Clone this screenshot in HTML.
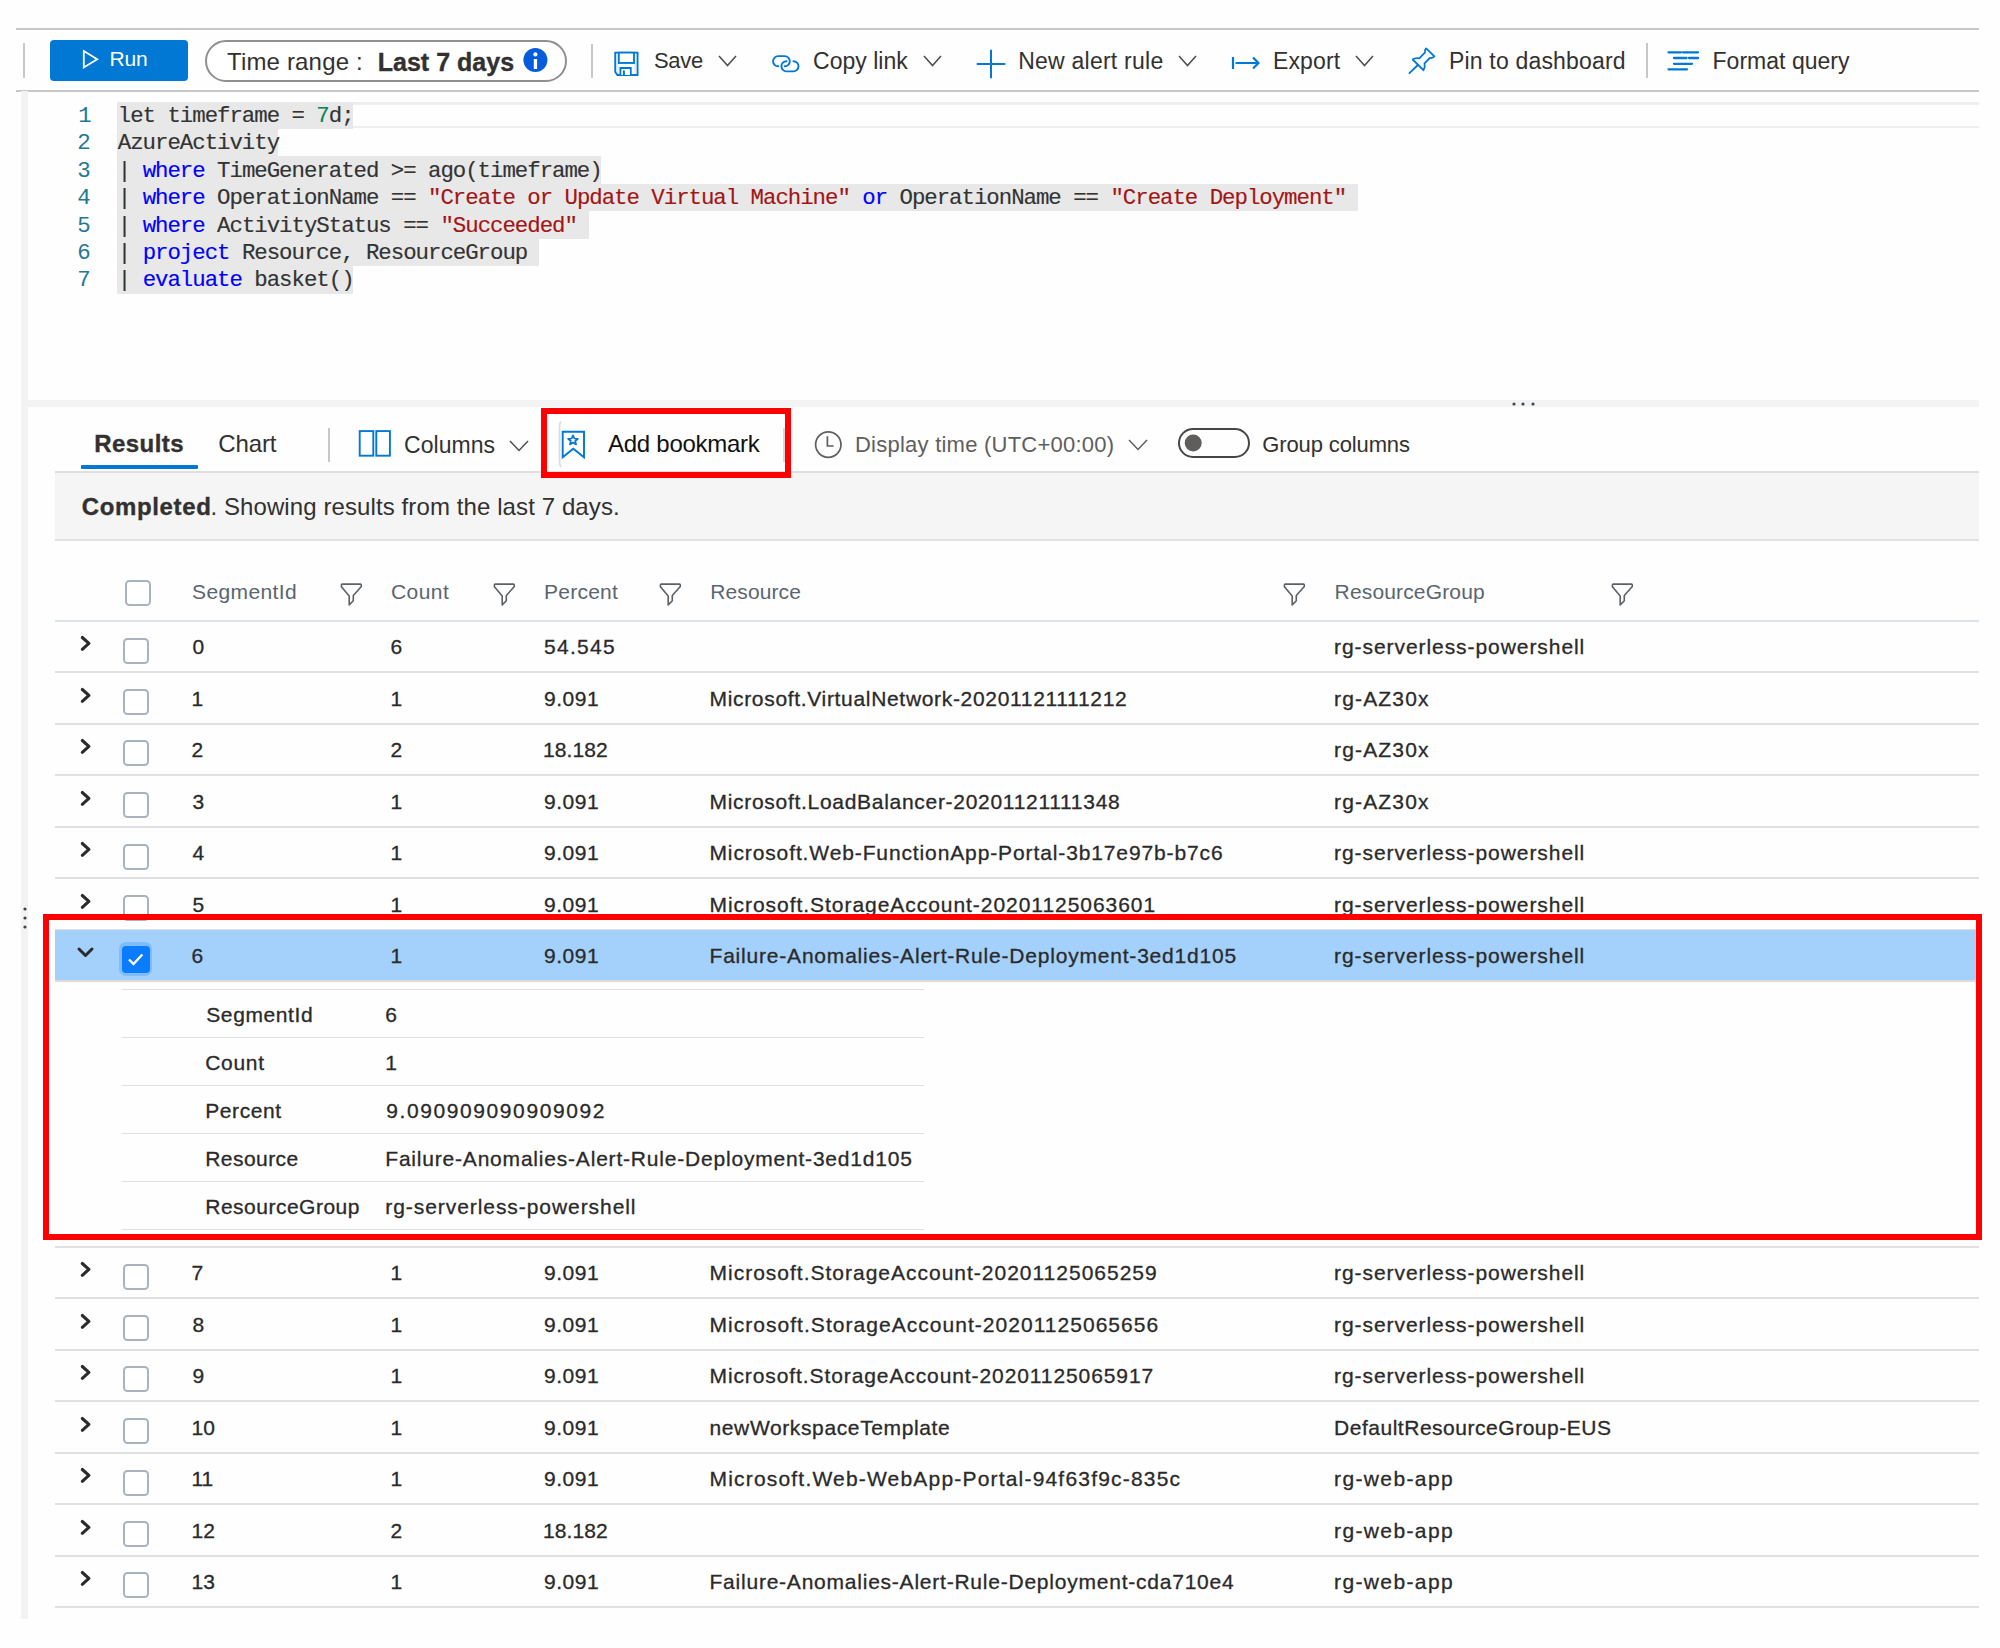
<!DOCTYPE html>
<html><head><meta charset="utf-8"><title>Log Analytics</title>
<style>
html,body{margin:0;padding:0;background:#fefefe;}
body{width:2000px;height:1648px;position:relative;overflow:hidden;font-family:"Liberation Sans", sans-serif;}
b{font-weight:bold}
</style></head><body>
<div style="position:absolute;left:16px;top:28px;width:1963px;height:2px;background:#c8c8c8;"></div>
<div style="position:absolute;left:16px;top:89.5px;width:1963px;height:2px;background:#c8c8c8;"></div>
<div style="position:absolute;left:23px;top:43px;width:2px;height:35px;background:#c8c8c8;"></div>
<div style="position:absolute;left:50px;top:40px;width:138px;height:41px;box-sizing:border-box;background:#0078d4;border-radius:4px"></div>
<svg style="position:absolute;left:80px;top:47px;overflow:visible;" width="22" height="25" viewBox="0 0 22 25"><path d="M3.8 4.0 L17.2 12.2 L3.8 20.4 Z" fill="none" stroke="#fff" stroke-width="1.8" stroke-linejoin="miter"/></svg>
<div style="position:absolute;left:205px;top:40px;width:362px;height:42px;box-sizing:border-box;border:2px solid #8f8f8f;border-radius:21px;background:#fff"></div>
<svg style="position:absolute;left:523px;top:48px;overflow:visible;" width="25" height="25" viewBox="0 0 25 25"><circle cx="12.4" cy="12" r="12" fill="#065cdc"/><circle cx="12.4" cy="6.4" r="2.1" fill="#fff"/><rect x="10.8" y="11" width="3.3" height="10" fill="#fff"/></svg>
<div style="position:absolute;left:591px;top:43.5px;width:2px;height:34px;background:#c8c8c8;"></div>
<svg style="position:absolute;left:610px;top:48px;overflow:visible;" width="32" height="32" viewBox="0 0 32 32"><path d="M5.2 4.7 H27.6 V27 H7.4 L5.2 23.9 Z" fill="#e3effb" stroke="#0078d4" stroke-width="1.8" stroke-linejoin="miter"/><path d="M8.8 4.7 V15 H24 V4.7 Z" fill="#fff" stroke="#0078d4" stroke-width="1.8"/><path d="M8.8 15.9 H24 V26.1 H8.8 Z" fill="#fff"/><path d="M10.4 27 V20 H20.8 V27" fill="#fff" stroke="#0078d4" stroke-width="1.8"/><path d="M13.9 23.3 V27" stroke="#0078d4" stroke-width="2" stroke-linecap="round"/></svg>
<svg style="position:absolute;left:717.5px;top:55px;overflow:visible;" width="19" height="11" viewBox="0 0 19 11"><path d="M1 1 L9.5 10.5 L18 1" fill="none" stroke="#505050" stroke-width="1.6"/></svg>
<svg style="position:absolute;left:765px;top:48px;overflow:visible;" width="40" height="30" viewBox="0 0 40 30"><path d="M13.2 18.3 A5.1 5.1 0 0 1 13.2 8.1 H19.7 A5.1 5.1 0 0 1 19.7 18.3" fill="none" stroke="#0078d4" stroke-width="1.9" stroke-linecap="round"/><path d="M21.5 13.2 A5.1 5.1 0 0 0 21.5 23.4 H28.4 A5.1 5.1 0 0 0 28.4 13.2" fill="none" stroke="#0078d4" stroke-width="1.9" stroke-linecap="round"/></svg>
<svg style="position:absolute;left:922.7px;top:55px;overflow:visible;" width="19" height="11" viewBox="0 0 19 11"><path d="M1 1 L9.5 10.5 L18 1" fill="none" stroke="#505050" stroke-width="1.6"/></svg>
<svg style="position:absolute;left:976px;top:49px;overflow:visible;" width="30" height="30" viewBox="0 0 30 30"><path d="M15 1.5 V28.5 M1.5 15 H28.5" stroke="#0078d4" stroke-width="2" stroke-linecap="round"/></svg>
<svg style="position:absolute;left:1177.6px;top:55px;overflow:visible;" width="19" height="11" viewBox="0 0 19 11"><path d="M1 1 L9.5 10.5 L18 1" fill="none" stroke="#505050" stroke-width="1.6"/></svg>
<svg style="position:absolute;left:1230px;top:55px;overflow:visible;" width="31" height="16" viewBox="0 0 31 16"><path d="M3 2 V14" stroke="#0078d4" stroke-width="2.2"/><path d="M5.5 8 H28.5 M23 2.5 L28.5 8 L23 13.5" fill="none" stroke="#0078d4" stroke-width="2.2"/></svg>
<svg style="position:absolute;left:1354.7px;top:55px;overflow:visible;" width="19" height="11" viewBox="0 0 19 11"><path d="M1 1 L9.5 10.5 L18 1" fill="none" stroke="#505050" stroke-width="1.6"/></svg>
<svg style="position:absolute;left:1403px;top:44px;overflow:visible;" width="38" height="34" viewBox="0 0 38 34"><path d="M23.1 4.4 L31.4 12.4 Q29 14.6 26.8 14.0 L21.5 19.4 Q22.5 23 20.4 26.2 L9.7 15.5 Q12.5 13.5 16.3 14.4 L21.9 8.7 Q21.3 6.5 23.1 4.4 Z" fill="none" stroke="#0078d4" stroke-width="1.8" stroke-linejoin="round"/><path d="M14.9 21.0 L6.4 29.1" stroke="#0078d4" stroke-width="1.8" stroke-linecap="round"/></svg>
<div style="position:absolute;left:1646px;top:43px;width:2px;height:34.5px;background:#c8c8c8;"></div>
<svg style="position:absolute;left:1666px;top:50px;overflow:visible;" width="34" height="22" viewBox="0 0 34 22"><path d="M2.5 2.3 H15 M17 2.3 H32 M8 8 H20.5 M23 8 H32 M8 13.8 H26 M2.5 19.3 H21" stroke="#0078d4" stroke-width="2.3" stroke-linecap="round"/></svg>
<div style="position:absolute;left:21px;top:91px;width:7px;height:1528px;background:#f3f3f3;"></div>
<div style="position:absolute;left:117px;top:102px;width:1862px;height:2.6px;background:#eeeeee;"></div>
<div style="position:absolute;left:117px;top:125.9px;width:1862px;height:2.6px;background:#eeeeee;"></div>
<div style="position:absolute;left:117px;top:101.6px;width:235.79px;height:27.73px;background:#e8e8e8;"></div>
<div style="position:absolute;left:117px;top:128.93px;width:161.33px;height:27.73px;background:#e8e8e8;"></div>
<div style="position:absolute;left:117px;top:156.26px;width:483.99px;height:27.73px;background:#e8e8e8;"></div>
<div style="position:absolute;left:117px;top:183.59px;width:1241.0px;height:27.73px;background:#e8e8e8;"></div>
<div style="position:absolute;left:117px;top:210.92px;width:471.58px;height:27.73px;background:#e8e8e8;"></div>
<div style="position:absolute;left:117px;top:238.25px;width:421.94px;height:27.73px;background:#e8e8e8;"></div>
<div style="position:absolute;left:117px;top:265.58px;width:235.79px;height:28.2px;background:#e8e8e8;"></div>
<div style="position:absolute;left:28px;top:400px;width:1951px;height:7px;background:#f3f3f3;"></div>
<svg style="position:absolute;left:1512.3px;top:401.5px;overflow:visible;" width="4" height="4" viewBox="0 0 4 4"><circle cx="2" cy="2" r="1.6" fill="#3f4651"/></svg>
<svg style="position:absolute;left:1521.4px;top:401.5px;overflow:visible;" width="4" height="4" viewBox="0 0 4 4"><circle cx="2" cy="2" r="1.6" fill="#3f4651"/></svg>
<svg style="position:absolute;left:1530.5px;top:401.5px;overflow:visible;" width="4" height="4" viewBox="0 0 4 4"><circle cx="2" cy="2" r="1.6" fill="#3f4651"/></svg>
<div style="position:absolute;left:81px;top:465.2px;width:117px;height:3.6px;background:#0078d4;border-radius:1px"></div>
<div style="position:absolute;left:328px;top:428px;width:2px;height:34px;background:#c8c8c8;"></div>
<svg style="position:absolute;left:357px;top:429px;overflow:visible;" width="36" height="28" viewBox="0 0 36 28"><rect x="2.7" y="2.1" width="13.6" height="24.6" fill="none" stroke="#0078d4" stroke-width="1.9"/><rect x="19.3" y="2.1" width="13.6" height="24.6" fill="none" stroke="#0078d4" stroke-width="1.9"/></svg>
<svg style="position:absolute;left:509px;top:440.4px;overflow:visible;" width="20" height="11" viewBox="0 0 20 11"><path d="M1 1 L10.0 10.5 L19 1" fill="none" stroke="#505050" stroke-width="1.5"/></svg>
<svg style="position:absolute;left:556px;top:420px;overflow:visible;" width="6" height="50" viewBox="0 0 6 50"><path d="M5 1.5 Q3.5 3 3.5 7 V41 Q3.5 45 5 47" fill="none" stroke="#dddddd" stroke-width="1.8"/></svg>
<div style="position:absolute;left:782.8px;top:428px;width:1.8px;height:34px;background:#d8d8d8;"></div>
<svg style="position:absolute;left:560px;top:430px;overflow:visible;" width="27" height="30" viewBox="0 0 27 30"><path d="M2.7 1.7 H24 V27.3 L13.3 18.7 L2.7 27.3 Z" fill="none" stroke="#0078d4" stroke-width="1.9" stroke-linejoin="miter"/><path d="M13 5.3 L14.4 8.5 L17.9 8.8 L15.2 11 L16.1 14.4 L13 12.6 L9.9 14.4 L10.8 11 L8.1 8.8 L11.6 8.5 Z" fill="none" stroke="#0078d4" stroke-width="1.7" stroke-linejoin="round"/></svg>
<svg style="position:absolute;left:813px;top:430px;overflow:visible;" width="31" height="30" viewBox="0 0 31 30"><circle cx="15.3" cy="14.6" r="12.7" fill="none" stroke="#605e5c" stroke-width="1.7"/><path d="M14.4 6.2 V16 H20.6" fill="none" stroke="#605e5c" stroke-width="1.7"/></svg>
<svg style="position:absolute;left:1128px;top:438.9px;overflow:visible;" width="20" height="11" viewBox="0 0 20 11"><path d="M1 1 L10.0 10.5 L19 1" fill="none" stroke="#605e5c" stroke-width="1.5"/></svg>
<div style="position:absolute;left:1178px;top:428px;width:72px;height:30.2px;box-sizing:border-box;border:2px solid #484644;border-radius:15.1px"></div>
<svg style="position:absolute;left:1184px;top:434px;overflow:visible;" width="18" height="18" viewBox="0 0 18 18"><circle cx="9.2" cy="8.9" r="8.5" fill="#605e5c"/></svg>
<div style="position:absolute;left:55px;top:470.6px;width:1924px;height:2px;background:#e1dfdd;"></div>
<div style="position:absolute;left:55px;top:472.6px;width:1924px;height:66.6px;background:#f5f5f5;"></div>
<div style="position:absolute;left:55px;top:539.2px;width:1924px;height:2px;background:#e1e1e1;"></div>
<div style="position:absolute;left:541px;top:408px;width:250px;height:70px;box-sizing:border-box;border:6px solid #ff0000;z-index:5"></div>
<div style="position:absolute;left:124.5px;top:580px;width:26.3px;height:26.3px;box-sizing:border-box;border:2px solid #a9b3bd;border-radius:4.5px;background:#fff"></div>
<svg style="position:absolute;left:341px;top:583px;overflow:visible;" width="22" height="23" viewBox="0 0 22 23"><path d="M1.3 1.1 H19.4 Q20.3 1.1 20.3 2 V3.4 L12.3 12.6 V17.7 L8.2 21.9 V13.1 L0.4 3.7 V2 Q0.4 1.1 1.3 1.1 Z" fill="none" stroke="#5c6166" stroke-width="1.6" stroke-linejoin="round"/></svg>
<svg style="position:absolute;left:493.5px;top:583px;overflow:visible;" width="22" height="23" viewBox="0 0 22 23"><path d="M1.3 1.1 H19.4 Q20.3 1.1 20.3 2 V3.4 L12.3 12.6 V17.7 L8.2 21.9 V13.1 L0.4 3.7 V2 Q0.4 1.1 1.3 1.1 Z" fill="none" stroke="#5c6166" stroke-width="1.6" stroke-linejoin="round"/></svg>
<svg style="position:absolute;left:660px;top:583px;overflow:visible;" width="22" height="23" viewBox="0 0 22 23"><path d="M1.3 1.1 H19.4 Q20.3 1.1 20.3 2 V3.4 L12.3 12.6 V17.7 L8.2 21.9 V13.1 L0.4 3.7 V2 Q0.4 1.1 1.3 1.1 Z" fill="none" stroke="#5c6166" stroke-width="1.6" stroke-linejoin="round"/></svg>
<svg style="position:absolute;left:1284.4px;top:583px;overflow:visible;" width="22" height="23" viewBox="0 0 22 23"><path d="M1.3 1.1 H19.4 Q20.3 1.1 20.3 2 V3.4 L12.3 12.6 V17.7 L8.2 21.9 V13.1 L0.4 3.7 V2 Q0.4 1.1 1.3 1.1 Z" fill="none" stroke="#5c6166" stroke-width="1.6" stroke-linejoin="round"/></svg>
<svg style="position:absolute;left:1612px;top:583px;overflow:visible;" width="22" height="23" viewBox="0 0 22 23"><path d="M1.3 1.1 H19.4 Q20.3 1.1 20.3 2 V3.4 L12.3 12.6 V17.7 L8.2 21.9 V13.1 L0.4 3.7 V2 Q0.4 1.1 1.3 1.1 Z" fill="none" stroke="#5c6166" stroke-width="1.6" stroke-linejoin="round"/></svg>
<div style="position:absolute;left:55px;top:619.5px;width:1924px;height:2px;background:#dde3ea;"></div>
<svg style="position:absolute;left:79.5px;top:636.0px;overflow:visible;" width="12" height="17" viewBox="0 0 12 17"><path d="M2.3 1.5 L8.9 7.4 L2.3 13.3" fill="none" stroke="#2b2b2b" stroke-width="3.1" stroke-linecap="round" stroke-linejoin="round"/></svg>
<div style="position:absolute;left:123px;top:638px;width:26.3px;height:26.3px;box-sizing:border-box;border:2px solid #a9b3bd;border-radius:4.5px;background:#fff"></div>
<div style="position:absolute;left:55px;top:671.0px;width:1924px;height:2px;background:#e0e0e0;"></div>
<svg style="position:absolute;left:79.5px;top:687.5px;overflow:visible;" width="12" height="17" viewBox="0 0 12 17"><path d="M2.3 1.5 L8.9 7.4 L2.3 13.3" fill="none" stroke="#2b2b2b" stroke-width="3.1" stroke-linecap="round" stroke-linejoin="round"/></svg>
<div style="position:absolute;left:123px;top:689px;width:26.3px;height:26.3px;box-sizing:border-box;border:2px solid #a9b3bd;border-radius:4.5px;background:#fff"></div>
<div style="position:absolute;left:55px;top:722.5px;width:1924px;height:2px;background:#e0e0e0;"></div>
<svg style="position:absolute;left:79.5px;top:739.0px;overflow:visible;" width="12" height="17" viewBox="0 0 12 17"><path d="M2.3 1.5 L8.9 7.4 L2.3 13.3" fill="none" stroke="#2b2b2b" stroke-width="3.1" stroke-linecap="round" stroke-linejoin="round"/></svg>
<div style="position:absolute;left:123px;top:740px;width:26.3px;height:26.3px;box-sizing:border-box;border:2px solid #a9b3bd;border-radius:4.5px;background:#fff"></div>
<div style="position:absolute;left:55px;top:774.0px;width:1924px;height:2px;background:#e0e0e0;"></div>
<svg style="position:absolute;left:79.5px;top:790.5px;overflow:visible;" width="12" height="17" viewBox="0 0 12 17"><path d="M2.3 1.5 L8.9 7.4 L2.3 13.3" fill="none" stroke="#2b2b2b" stroke-width="3.1" stroke-linecap="round" stroke-linejoin="round"/></svg>
<div style="position:absolute;left:123px;top:792px;width:26.3px;height:26.3px;box-sizing:border-box;border:2px solid #a9b3bd;border-radius:4.5px;background:#fff"></div>
<div style="position:absolute;left:55px;top:825.5px;width:1924px;height:2px;background:#e0e0e0;"></div>
<svg style="position:absolute;left:79.5px;top:842.0px;overflow:visible;" width="12" height="17" viewBox="0 0 12 17"><path d="M2.3 1.5 L8.9 7.4 L2.3 13.3" fill="none" stroke="#2b2b2b" stroke-width="3.1" stroke-linecap="round" stroke-linejoin="round"/></svg>
<div style="position:absolute;left:123px;top:844px;width:26.3px;height:26.3px;box-sizing:border-box;border:2px solid #a9b3bd;border-radius:4.5px;background:#fff"></div>
<div style="position:absolute;left:55px;top:877.0px;width:1924px;height:2px;background:#e0e0e0;"></div>
<svg style="position:absolute;left:79.5px;top:893.5px;overflow:visible;" width="12" height="17" viewBox="0 0 12 17"><path d="M2.3 1.5 L8.9 7.4 L2.3 13.3" fill="none" stroke="#2b2b2b" stroke-width="3.1" stroke-linecap="round" stroke-linejoin="round"/></svg>
<div style="position:absolute;left:123px;top:895px;width:26.3px;height:26.3px;box-sizing:border-box;border:2px solid #a9b3bd;border-radius:4.5px;background:#fff"></div>
<div style="position:absolute;left:55px;top:930.0px;width:1924px;height:50.5px;background:#a3d1fb;"></div>
<svg style="position:absolute;left:76.5px;top:946.5px;overflow:visible;" width="18" height="12" viewBox="0 0 18 12"><path d="M2 2 L8.5 8.5 L15 2" fill="none" stroke="#2b2b2b" stroke-width="3" stroke-linecap="round" stroke-linejoin="round"/></svg>
<div style="position:absolute;left:119px;top:942.0px;width:33px;height:34px;box-sizing:border-box;background:#7fbcfb;border-radius:7px"></div>
<div style="position:absolute;left:122px;top:946.0px;width:28px;height:27px;box-sizing:border-box;background:#0a7cff;border-radius:4px"></div>
<svg style="position:absolute;left:122px;top:946.0px;overflow:visible;" width="28" height="27" viewBox="0 0 28 27"><path d="M7 13.5 L11.5 18 L20.3 8.5" fill="none" stroke="#fff" stroke-width="2.4"/></svg>
<div style="position:absolute;left:55px;top:928.6px;width:1924px;height:1.8px;background:#e0e0e0;"></div>
<div style="position:absolute;left:55px;top:980px;width:1924px;height:1.6px;background:#dcdcdc;"></div>
<div style="position:absolute;left:122px;top:988.6px;width:802px;height:1.8px;background:#e0e0e0;"></div>
<div style="position:absolute;left:122px;top:1036.6px;width:802px;height:1.8px;background:#e0e0e0;"></div>
<div style="position:absolute;left:122px;top:1084.6px;width:802px;height:1.8px;background:#e0e0e0;"></div>
<div style="position:absolute;left:122px;top:1132.6px;width:802px;height:1.8px;background:#e0e0e0;"></div>
<div style="position:absolute;left:122px;top:1180.6px;width:802px;height:1.8px;background:#e0e0e0;"></div>
<div style="position:absolute;left:122px;top:1228.6px;width:802px;height:1.8px;background:#e0e0e0;"></div>
<div style="position:absolute;left:55px;top:1245.5px;width:1924px;height:2px;background:#e0e0e0;"></div>
<svg style="position:absolute;left:79.5px;top:1262.0px;overflow:visible;" width="12" height="17" viewBox="0 0 12 17"><path d="M2.3 1.5 L8.9 7.4 L2.3 13.3" fill="none" stroke="#2b2b2b" stroke-width="3.1" stroke-linecap="round" stroke-linejoin="round"/></svg>
<div style="position:absolute;left:123px;top:1264px;width:26.3px;height:26.3px;box-sizing:border-box;border:2px solid #a9b3bd;border-radius:4.5px;background:#fff"></div>
<div style="position:absolute;left:55px;top:1297.0px;width:1924px;height:2px;background:#e0e0e0;"></div>
<svg style="position:absolute;left:79.5px;top:1313.5px;overflow:visible;" width="12" height="17" viewBox="0 0 12 17"><path d="M2.3 1.5 L8.9 7.4 L2.3 13.3" fill="none" stroke="#2b2b2b" stroke-width="3.1" stroke-linecap="round" stroke-linejoin="round"/></svg>
<div style="position:absolute;left:123px;top:1315px;width:26.3px;height:26.3px;box-sizing:border-box;border:2px solid #a9b3bd;border-radius:4.5px;background:#fff"></div>
<div style="position:absolute;left:55px;top:1348.5px;width:1924px;height:2px;background:#e0e0e0;"></div>
<svg style="position:absolute;left:79.5px;top:1365.0px;overflow:visible;" width="12" height="17" viewBox="0 0 12 17"><path d="M2.3 1.5 L8.9 7.4 L2.3 13.3" fill="none" stroke="#2b2b2b" stroke-width="3.1" stroke-linecap="round" stroke-linejoin="round"/></svg>
<div style="position:absolute;left:123px;top:1366px;width:26.3px;height:26.3px;box-sizing:border-box;border:2px solid #a9b3bd;border-radius:4.5px;background:#fff"></div>
<div style="position:absolute;left:55px;top:1400.0px;width:1924px;height:2px;background:#e0e0e0;"></div>
<svg style="position:absolute;left:79.5px;top:1416.5px;overflow:visible;" width="12" height="17" viewBox="0 0 12 17"><path d="M2.3 1.5 L8.9 7.4 L2.3 13.3" fill="none" stroke="#2b2b2b" stroke-width="3.1" stroke-linecap="round" stroke-linejoin="round"/></svg>
<div style="position:absolute;left:123px;top:1418px;width:26.3px;height:26.3px;box-sizing:border-box;border:2px solid #a9b3bd;border-radius:4.5px;background:#fff"></div>
<div style="position:absolute;left:55px;top:1451.5px;width:1924px;height:2px;background:#e0e0e0;"></div>
<svg style="position:absolute;left:79.5px;top:1468.0px;overflow:visible;" width="12" height="17" viewBox="0 0 12 17"><path d="M2.3 1.5 L8.9 7.4 L2.3 13.3" fill="none" stroke="#2b2b2b" stroke-width="3.1" stroke-linecap="round" stroke-linejoin="round"/></svg>
<div style="position:absolute;left:123px;top:1470px;width:26.3px;height:26.3px;box-sizing:border-box;border:2px solid #a9b3bd;border-radius:4.5px;background:#fff"></div>
<div style="position:absolute;left:55px;top:1503.0px;width:1924px;height:2px;background:#e0e0e0;"></div>
<svg style="position:absolute;left:79.5px;top:1519.5px;overflow:visible;" width="12" height="17" viewBox="0 0 12 17"><path d="M2.3 1.5 L8.9 7.4 L2.3 13.3" fill="none" stroke="#2b2b2b" stroke-width="3.1" stroke-linecap="round" stroke-linejoin="round"/></svg>
<div style="position:absolute;left:123px;top:1521px;width:26.3px;height:26.3px;box-sizing:border-box;border:2px solid #a9b3bd;border-radius:4.5px;background:#fff"></div>
<div style="position:absolute;left:55px;top:1554.5px;width:1924px;height:2px;background:#e0e0e0;"></div>
<svg style="position:absolute;left:79.5px;top:1571.0px;overflow:visible;" width="12" height="17" viewBox="0 0 12 17"><path d="M2.3 1.5 L8.9 7.4 L2.3 13.3" fill="none" stroke="#2b2b2b" stroke-width="3.1" stroke-linecap="round" stroke-linejoin="round"/></svg>
<div style="position:absolute;left:123px;top:1572px;width:26.3px;height:26.3px;box-sizing:border-box;border:2px solid #a9b3bd;border-radius:4.5px;background:#fff"></div>
<div style="position:absolute;left:55px;top:1606.0px;width:1924px;height:2px;background:#e0e0e0;"></div>
<div style="position:absolute;left:43px;top:914px;width:1939px;height:326px;box-sizing:border-box;border:6px solid #ff0000;z-index:5"></div>
<svg style="position:absolute;left:22.5px;top:907.1px;overflow:visible;" width="4" height="4" viewBox="0 0 4 4"><circle cx="2" cy="2" r="1.6" fill="#3d434a"/></svg>
<svg style="position:absolute;left:22.5px;top:916.3px;overflow:visible;" width="4" height="4" viewBox="0 0 4 4"><circle cx="2" cy="2" r="1.6" fill="#3d434a"/></svg>
<svg style="position:absolute;left:22.5px;top:925.4px;overflow:visible;" width="4" height="4" viewBox="0 0 4 4"><circle cx="2" cy="2" r="1.6" fill="#3d434a"/></svg>
<div style="position:absolute;left:109.50px;top:48.02px;font:21px 'Liberation Sans', sans-serif;line-height:21px;color:#ffffff;letter-spacing:-0.172px;white-space:pre">Run</div>
<div style="position:absolute;left:227.00px;top:50.48px;font:24px 'Liberation Sans', sans-serif;line-height:24px;color:#323130;letter-spacing:0.167px;white-space:pre">Time range :</div>
<div style="position:absolute;left:377.70px;top:49.64px;font:bold 25px 'Liberation Sans', sans-serif;line-height:25px;color:#323130;letter-spacing:0.022px;white-space:pre;-webkit-text-stroke:0.35px">Last 7 days</div>
<div style="position:absolute;left:654.00px;top:50.38px;font:22px 'Liberation Sans', sans-serif;line-height:22px;color:#323130;letter-spacing:-0.303px;white-space:pre">Save</div>
<div style="position:absolute;left:813.00px;top:49.53px;font:23px 'Liberation Sans', sans-serif;line-height:23px;color:#323130;letter-spacing:0.026px;white-space:pre">Copy link</div>
<div style="position:absolute;left:1018.20px;top:49.53px;font:23px 'Liberation Sans', sans-serif;line-height:23px;color:#323130;letter-spacing:0.239px;white-space:pre">New alert rule</div>
<div style="position:absolute;left:1273.00px;top:49.53px;font:23px 'Liberation Sans', sans-serif;line-height:23px;color:#323130;letter-spacing:0.123px;white-space:pre">Export</div>
<div style="position:absolute;left:1449.00px;top:49.53px;font:23px 'Liberation Sans', sans-serif;line-height:23px;color:#323130;letter-spacing:0.179px;white-space:pre">Pin to dashboard</div>
<div style="position:absolute;left:1712.50px;top:49.53px;font:23px 'Liberation Sans', sans-serif;line-height:23px;color:#323130;letter-spacing:0.021px;white-space:pre">Format query</div>
<div style="position:absolute;left:117.81px;top:105.13px;font:22.4px 'Liberation Mono', monospace;line-height:22.4px;color:#333;letter-spacing:-1.030px;white-space:pre;-webkit-text-stroke:0.15px"><span style="color:#333">let timeframe = </span><span style="color:#098658">7</span><span style="color:#333">d;</span></div>
<div style="position:absolute;left:78.30px;top:105.13px;font:22.4px 'Liberation Mono', monospace;line-height:22.4px;color:#237893;letter-spacing:0.000px;white-space:pre">1</div>
<div style="position:absolute;left:117.81px;top:132.48px;font:22.4px 'Liberation Mono', monospace;line-height:22.4px;color:#333;letter-spacing:-1.030px;white-space:pre;-webkit-text-stroke:0.15px"><span style="color:#333">AzureActivity</span></div>
<div style="position:absolute;left:77.30px;top:132.48px;font:22.4px 'Liberation Mono', monospace;line-height:22.4px;color:#237893;letter-spacing:0.000px;white-space:pre">2</div>
<div style="position:absolute;left:117.81px;top:159.83px;font:22.4px 'Liberation Mono', monospace;line-height:22.4px;color:#333;letter-spacing:-1.030px;white-space:pre;-webkit-text-stroke:0.15px"><span style="color:#333">| </span><span style="color:#0000ff">where</span><span style="color:#333"> TimeGenerated &gt;= ago(timeframe)</span></div>
<div style="position:absolute;left:77.30px;top:159.83px;font:22.4px 'Liberation Mono', monospace;line-height:22.4px;color:#237893;letter-spacing:0.000px;white-space:pre">3</div>
<div style="position:absolute;left:117.81px;top:187.18px;font:22.4px 'Liberation Mono', monospace;line-height:22.4px;color:#333;letter-spacing:-1.030px;white-space:pre;-webkit-text-stroke:0.15px"><span style="color:#333">| </span><span style="color:#0000ff">where</span><span style="color:#333"> OperationName == </span><span style="color:#a31515">&quot;Create or Update Virtual Machine&quot;</span><span style="color:#333"> </span><span style="color:#0000ff">or</span><span style="color:#333"> OperationName == </span><span style="color:#a31515">&quot;Create Deployment&quot;</span><span style="color:#333"> </span></div>
<div style="position:absolute;left:77.30px;top:187.18px;font:22.4px 'Liberation Mono', monospace;line-height:22.4px;color:#237893;letter-spacing:0.000px;white-space:pre">4</div>
<div style="position:absolute;left:117.81px;top:214.53px;font:22.4px 'Liberation Mono', monospace;line-height:22.4px;color:#333;letter-spacing:-1.030px;white-space:pre;-webkit-text-stroke:0.15px"><span style="color:#333">| </span><span style="color:#0000ff">where</span><span style="color:#333"> ActivityStatus == </span><span style="color:#a31515">&quot;Succeeded&quot;</span><span style="color:#333"> </span></div>
<div style="position:absolute;left:77.30px;top:214.53px;font:22.4px 'Liberation Mono', monospace;line-height:22.4px;color:#237893;letter-spacing:0.000px;white-space:pre">5</div>
<div style="position:absolute;left:117.81px;top:241.88px;font:22.4px 'Liberation Mono', monospace;line-height:22.4px;color:#333;letter-spacing:-1.030px;white-space:pre;-webkit-text-stroke:0.15px"><span style="color:#333">| </span><span style="color:#0000ff">project</span><span style="color:#333"> Resource, ResourceGroup </span></div>
<div style="position:absolute;left:77.30px;top:241.88px;font:22.4px 'Liberation Mono', monospace;line-height:22.4px;color:#237893;letter-spacing:0.000px;white-space:pre">6</div>
<div style="position:absolute;left:117.81px;top:269.23px;font:22.4px 'Liberation Mono', monospace;line-height:22.4px;color:#333;letter-spacing:-1.030px;white-space:pre;-webkit-text-stroke:0.15px"><span style="color:#333">| </span><span style="color:#0000ff">evaluate</span><span style="color:#333"> basket()</span></div>
<div style="position:absolute;left:77.30px;top:269.23px;font:22.4px 'Liberation Mono', monospace;line-height:22.4px;color:#237893;letter-spacing:0.000px;white-space:pre">7</div>
<div style="position:absolute;left:94.20px;top:431.68px;font:bold 24px 'Liberation Sans', sans-serif;line-height:24px;color:#323130;letter-spacing:0.442px;white-space:pre;-webkit-text-stroke:0.35px">Results</div>
<div style="position:absolute;left:218.20px;top:431.68px;font:24px 'Liberation Sans', sans-serif;line-height:24px;color:#323130;letter-spacing:-0.105px;white-space:pre">Chart</div>
<div style="position:absolute;left:404.00px;top:433.93px;font:23px 'Liberation Sans', sans-serif;line-height:23px;color:#323130;letter-spacing:0.041px;white-space:pre">Columns</div>
<div style="position:absolute;left:608.00px;top:432.38px;font:24px 'Liberation Sans', sans-serif;line-height:24px;color:#111111;letter-spacing:-0.268px;white-space:pre">Add bookmark</div>
<div style="position:absolute;left:855.00px;top:434.18px;font:22px 'Liberation Sans', sans-serif;line-height:22px;color:#605e5c;letter-spacing:0.236px;white-space:pre">Display time (UTC+00:00)</div>
<div style="position:absolute;left:1262.20px;top:434.18px;font:22px 'Liberation Sans', sans-serif;line-height:22px;color:#323130;letter-spacing:-0.115px;white-space:pre">Group columns</div>
<div style="position:absolute;left:81.70px;top:494.68px;font:bold 24px 'Liberation Sans', sans-serif;line-height:24px;color:#323130;letter-spacing:0.644px;white-space:pre;-webkit-text-stroke:0.35px">Completed</div>
<div style="position:absolute;left:210.40px;top:494.68px;font:24px 'Liberation Sans', sans-serif;line-height:24px;color:#323130;letter-spacing:0.099px;white-space:pre">. Showing results from the last 7 days.</div>
<div style="position:absolute;left:192.00px;top:581.42px;font:21px 'Liberation Sans', sans-serif;line-height:21px;color:#5b6570;letter-spacing:0.389px;white-space:pre">SegmentId</div>
<div style="position:absolute;left:391.00px;top:581.42px;font:21px 'Liberation Sans', sans-serif;line-height:21px;color:#5b6570;letter-spacing:0.449px;white-space:pre">Count</div>
<div style="position:absolute;left:544.00px;top:581.42px;font:21px 'Liberation Sans', sans-serif;line-height:21px;color:#5b6570;letter-spacing:0.244px;white-space:pre">Percent</div>
<div style="position:absolute;left:710.20px;top:581.42px;font:21px 'Liberation Sans', sans-serif;line-height:21px;color:#5b6570;letter-spacing:0.115px;white-space:pre">Resource</div>
<div style="position:absolute;left:1334.60px;top:581.42px;font:21px 'Liberation Sans', sans-serif;line-height:21px;color:#5b6570;letter-spacing:0.153px;white-space:pre">ResourceGroup</div>
<div style="position:absolute;left:192.50px;top:636.12px;font:21px 'Liberation Sans', sans-serif;line-height:21px;color:#2a2a2a;letter-spacing:0.000px;white-space:pre;-webkit-text-stroke:0.30px">0</div>
<div style="position:absolute;left:390.50px;top:636.12px;font:21px 'Liberation Sans', sans-serif;line-height:21px;color:#2a2a2a;letter-spacing:0.000px;white-space:pre;-webkit-text-stroke:0.30px">6</div>
<div style="position:absolute;left:544.00px;top:636.12px;font:21px 'Liberation Sans', sans-serif;line-height:21px;color:#2a2a2a;letter-spacing:1.290px;white-space:pre;-webkit-text-stroke:0.30px">54.545</div>
<div style="position:absolute;left:1334.00px;top:636.12px;font:21px 'Liberation Sans', sans-serif;line-height:21px;color:#2a2a2a;letter-spacing:0.936px;white-space:pre;-webkit-text-stroke:0.30px">rg-serverless-powershell</div>
<div style="position:absolute;left:191.50px;top:687.62px;font:21px 'Liberation Sans', sans-serif;line-height:21px;color:#2a2a2a;letter-spacing:0.000px;white-space:pre;-webkit-text-stroke:0.30px">1</div>
<div style="position:absolute;left:390.50px;top:687.62px;font:21px 'Liberation Sans', sans-serif;line-height:21px;color:#2a2a2a;letter-spacing:0.000px;white-space:pre;-webkit-text-stroke:0.30px">1</div>
<div style="position:absolute;left:544.00px;top:687.62px;font:21px 'Liberation Sans', sans-serif;line-height:21px;color:#2a2a2a;letter-spacing:0.532px;white-space:pre;-webkit-text-stroke:0.30px">9.091</div>
<div style="position:absolute;left:709.50px;top:687.62px;font:21px 'Liberation Sans', sans-serif;line-height:21px;color:#2a2a2a;letter-spacing:0.677px;white-space:pre;-webkit-text-stroke:0.30px">Microsoft.VirtualNetwork-20201121111212</div>
<div style="position:absolute;left:1334.00px;top:687.62px;font:21px 'Liberation Sans', sans-serif;line-height:21px;color:#2a2a2a;letter-spacing:1.163px;white-space:pre;-webkit-text-stroke:0.30px">rg-AZ30x</div>
<div style="position:absolute;left:191.50px;top:739.12px;font:21px 'Liberation Sans', sans-serif;line-height:21px;color:#2a2a2a;letter-spacing:0.000px;white-space:pre;-webkit-text-stroke:0.30px">2</div>
<div style="position:absolute;left:390.50px;top:739.12px;font:21px 'Liberation Sans', sans-serif;line-height:21px;color:#2a2a2a;letter-spacing:0.000px;white-space:pre;-webkit-text-stroke:0.30px">2</div>
<div style="position:absolute;left:543.00px;top:739.12px;font:21px 'Liberation Sans', sans-serif;line-height:21px;color:#2a2a2a;letter-spacing:0.090px;white-space:pre;-webkit-text-stroke:0.30px">18.182</div>
<div style="position:absolute;left:1334.00px;top:739.12px;font:21px 'Liberation Sans', sans-serif;line-height:21px;color:#2a2a2a;letter-spacing:1.163px;white-space:pre;-webkit-text-stroke:0.30px">rg-AZ30x</div>
<div style="position:absolute;left:192.50px;top:790.62px;font:21px 'Liberation Sans', sans-serif;line-height:21px;color:#2a2a2a;letter-spacing:0.000px;white-space:pre;-webkit-text-stroke:0.30px">3</div>
<div style="position:absolute;left:390.50px;top:790.62px;font:21px 'Liberation Sans', sans-serif;line-height:21px;color:#2a2a2a;letter-spacing:0.000px;white-space:pre;-webkit-text-stroke:0.30px">1</div>
<div style="position:absolute;left:544.00px;top:790.62px;font:21px 'Liberation Sans', sans-serif;line-height:21px;color:#2a2a2a;letter-spacing:0.532px;white-space:pre;-webkit-text-stroke:0.30px">9.091</div>
<div style="position:absolute;left:709.50px;top:790.62px;font:21px 'Liberation Sans', sans-serif;line-height:21px;color:#2a2a2a;letter-spacing:0.703px;white-space:pre;-webkit-text-stroke:0.30px">Microsoft.LoadBalancer-20201121111348</div>
<div style="position:absolute;left:1334.00px;top:790.62px;font:21px 'Liberation Sans', sans-serif;line-height:21px;color:#2a2a2a;letter-spacing:1.163px;white-space:pre;-webkit-text-stroke:0.30px">rg-AZ30x</div>
<div style="position:absolute;left:192.50px;top:842.12px;font:21px 'Liberation Sans', sans-serif;line-height:21px;color:#2a2a2a;letter-spacing:0.000px;white-space:pre;-webkit-text-stroke:0.30px">4</div>
<div style="position:absolute;left:390.50px;top:842.12px;font:21px 'Liberation Sans', sans-serif;line-height:21px;color:#2a2a2a;letter-spacing:0.000px;white-space:pre;-webkit-text-stroke:0.30px">1</div>
<div style="position:absolute;left:544.00px;top:842.12px;font:21px 'Liberation Sans', sans-serif;line-height:21px;color:#2a2a2a;letter-spacing:0.532px;white-space:pre;-webkit-text-stroke:0.30px">9.091</div>
<div style="position:absolute;left:709.50px;top:842.12px;font:21px 'Liberation Sans', sans-serif;line-height:21px;color:#2a2a2a;letter-spacing:0.881px;white-space:pre;-webkit-text-stroke:0.30px">Microsoft.Web-FunctionApp-Portal-3b17e97b-b7c6</div>
<div style="position:absolute;left:1334.00px;top:842.12px;font:21px 'Liberation Sans', sans-serif;line-height:21px;color:#2a2a2a;letter-spacing:0.936px;white-space:pre;-webkit-text-stroke:0.30px">rg-serverless-powershell</div>
<div style="position:absolute;left:192.50px;top:893.62px;font:21px 'Liberation Sans', sans-serif;line-height:21px;color:#2a2a2a;letter-spacing:0.000px;white-space:pre;-webkit-text-stroke:0.30px">5</div>
<div style="position:absolute;left:390.50px;top:893.62px;font:21px 'Liberation Sans', sans-serif;line-height:21px;color:#2a2a2a;letter-spacing:0.000px;white-space:pre;-webkit-text-stroke:0.30px">1</div>
<div style="position:absolute;left:544.00px;top:893.62px;font:21px 'Liberation Sans', sans-serif;line-height:21px;color:#2a2a2a;letter-spacing:0.532px;white-space:pre;-webkit-text-stroke:0.30px">9.091</div>
<div style="position:absolute;left:709.50px;top:893.62px;font:21px 'Liberation Sans', sans-serif;line-height:21px;color:#2a2a2a;letter-spacing:0.955px;white-space:pre;-webkit-text-stroke:0.30px">Microsoft.StorageAccount-20201125063601</div>
<div style="position:absolute;left:1334.00px;top:893.62px;font:21px 'Liberation Sans', sans-serif;line-height:21px;color:#2a2a2a;letter-spacing:0.936px;white-space:pre;-webkit-text-stroke:0.30px">rg-serverless-powershell</div>
<div style="position:absolute;left:191.50px;top:945.12px;font:21px 'Liberation Sans', sans-serif;line-height:21px;color:#2a2a2a;letter-spacing:0.000px;white-space:pre;-webkit-text-stroke:0.30px">6</div>
<div style="position:absolute;left:390.50px;top:945.12px;font:21px 'Liberation Sans', sans-serif;line-height:21px;color:#2a2a2a;letter-spacing:0.000px;white-space:pre;-webkit-text-stroke:0.30px">1</div>
<div style="position:absolute;left:544.00px;top:945.12px;font:21px 'Liberation Sans', sans-serif;line-height:21px;color:#2a2a2a;letter-spacing:0.532px;white-space:pre;-webkit-text-stroke:0.30px">9.091</div>
<div style="position:absolute;left:709.50px;top:945.12px;font:21px 'Liberation Sans', sans-serif;line-height:21px;color:#2a2a2a;letter-spacing:0.800px;white-space:pre;-webkit-text-stroke:0.30px">Failure-Anomalies-Alert-Rule-Deployment-3ed1d105</div>
<div style="position:absolute;left:1334.00px;top:945.12px;font:21px 'Liberation Sans', sans-serif;line-height:21px;color:#2a2a2a;letter-spacing:0.936px;white-space:pre;-webkit-text-stroke:0.30px">rg-serverless-powershell</div>
<div style="position:absolute;left:206.25px;top:1003.52px;font:21px 'Liberation Sans', sans-serif;line-height:21px;color:#2a2a2a;letter-spacing:0.608px;white-space:pre;-webkit-text-stroke:0.30px">SegmentId</div>
<div style="position:absolute;left:385.25px;top:1003.52px;font:21px 'Liberation Sans', sans-serif;line-height:21px;color:#2a2a2a;letter-spacing:0.000px;white-space:pre;-webkit-text-stroke:0.30px">6</div>
<div style="position:absolute;left:205.25px;top:1051.52px;font:21px 'Liberation Sans', sans-serif;line-height:21px;color:#2a2a2a;letter-spacing:0.699px;white-space:pre;-webkit-text-stroke:0.30px">Count</div>
<div style="position:absolute;left:385.25px;top:1051.52px;font:21px 'Liberation Sans', sans-serif;line-height:21px;color:#2a2a2a;letter-spacing:0.000px;white-space:pre;-webkit-text-stroke:0.30px">1</div>
<div style="position:absolute;left:205.25px;top:1099.52px;font:21px 'Liberation Sans', sans-serif;line-height:21px;color:#2a2a2a;letter-spacing:0.577px;white-space:pre;-webkit-text-stroke:0.30px">Percent</div>
<div style="position:absolute;left:386.25px;top:1099.52px;font:21px 'Liberation Sans', sans-serif;line-height:21px;color:#2a2a2a;letter-spacing:1.592px;white-space:pre;-webkit-text-stroke:0.30px">9.090909090909092</div>
<div style="position:absolute;left:205.25px;top:1147.52px;font:21px 'Liberation Sans', sans-serif;line-height:21px;color:#2a2a2a;letter-spacing:0.436px;white-space:pre;-webkit-text-stroke:0.30px">Resource</div>
<div style="position:absolute;left:385.25px;top:1147.52px;font:21px 'Liberation Sans', sans-serif;line-height:21px;color:#2a2a2a;letter-spacing:0.800px;white-space:pre;-webkit-text-stroke:0.30px">Failure-Anomalies-Alert-Rule-Deployment-3ed1d105</div>
<div style="position:absolute;left:205.25px;top:1195.52px;font:21px 'Liberation Sans', sans-serif;line-height:21px;color:#2a2a2a;letter-spacing:0.495px;white-space:pre;-webkit-text-stroke:0.30px">ResourceGroup</div>
<div style="position:absolute;left:385.25px;top:1195.52px;font:21px 'Liberation Sans', sans-serif;line-height:21px;color:#2a2a2a;letter-spacing:0.936px;white-space:pre;-webkit-text-stroke:0.30px">rg-serverless-powershell</div>
<div style="position:absolute;left:191.50px;top:1262.12px;font:21px 'Liberation Sans', sans-serif;line-height:21px;color:#2a2a2a;letter-spacing:0.000px;white-space:pre;-webkit-text-stroke:0.30px">7</div>
<div style="position:absolute;left:390.50px;top:1262.12px;font:21px 'Liberation Sans', sans-serif;line-height:21px;color:#2a2a2a;letter-spacing:0.000px;white-space:pre;-webkit-text-stroke:0.30px">1</div>
<div style="position:absolute;left:544.00px;top:1262.12px;font:21px 'Liberation Sans', sans-serif;line-height:21px;color:#2a2a2a;letter-spacing:0.532px;white-space:pre;-webkit-text-stroke:0.30px">9.091</div>
<div style="position:absolute;left:709.50px;top:1262.12px;font:21px 'Liberation Sans', sans-serif;line-height:21px;color:#2a2a2a;letter-spacing:0.995px;white-space:pre;-webkit-text-stroke:0.30px">Microsoft.StorageAccount-20201125065259</div>
<div style="position:absolute;left:1334.00px;top:1262.12px;font:21px 'Liberation Sans', sans-serif;line-height:21px;color:#2a2a2a;letter-spacing:0.936px;white-space:pre;-webkit-text-stroke:0.30px">rg-serverless-powershell</div>
<div style="position:absolute;left:192.50px;top:1313.62px;font:21px 'Liberation Sans', sans-serif;line-height:21px;color:#2a2a2a;letter-spacing:0.000px;white-space:pre;-webkit-text-stroke:0.30px">8</div>
<div style="position:absolute;left:390.50px;top:1313.62px;font:21px 'Liberation Sans', sans-serif;line-height:21px;color:#2a2a2a;letter-spacing:0.000px;white-space:pre;-webkit-text-stroke:0.30px">1</div>
<div style="position:absolute;left:544.00px;top:1313.62px;font:21px 'Liberation Sans', sans-serif;line-height:21px;color:#2a2a2a;letter-spacing:0.532px;white-space:pre;-webkit-text-stroke:0.30px">9.091</div>
<div style="position:absolute;left:709.50px;top:1313.62px;font:21px 'Liberation Sans', sans-serif;line-height:21px;color:#2a2a2a;letter-spacing:1.034px;white-space:pre;-webkit-text-stroke:0.30px">Microsoft.StorageAccount-20201125065656</div>
<div style="position:absolute;left:1334.00px;top:1313.62px;font:21px 'Liberation Sans', sans-serif;line-height:21px;color:#2a2a2a;letter-spacing:0.936px;white-space:pre;-webkit-text-stroke:0.30px">rg-serverless-powershell</div>
<div style="position:absolute;left:192.50px;top:1365.12px;font:21px 'Liberation Sans', sans-serif;line-height:21px;color:#2a2a2a;letter-spacing:0.000px;white-space:pre;-webkit-text-stroke:0.30px">9</div>
<div style="position:absolute;left:390.50px;top:1365.12px;font:21px 'Liberation Sans', sans-serif;line-height:21px;color:#2a2a2a;letter-spacing:0.000px;white-space:pre;-webkit-text-stroke:0.30px">1</div>
<div style="position:absolute;left:544.00px;top:1365.12px;font:21px 'Liberation Sans', sans-serif;line-height:21px;color:#2a2a2a;letter-spacing:0.532px;white-space:pre;-webkit-text-stroke:0.30px">9.091</div>
<div style="position:absolute;left:709.50px;top:1365.12px;font:21px 'Liberation Sans', sans-serif;line-height:21px;color:#2a2a2a;letter-spacing:0.902px;white-space:pre;-webkit-text-stroke:0.30px">Microsoft.StorageAccount-20201125065917</div>
<div style="position:absolute;left:1334.00px;top:1365.12px;font:21px 'Liberation Sans', sans-serif;line-height:21px;color:#2a2a2a;letter-spacing:0.936px;white-space:pre;-webkit-text-stroke:0.30px">rg-serverless-powershell</div>
<div style="position:absolute;left:191.50px;top:1416.62px;font:21px 'Liberation Sans', sans-serif;line-height:21px;color:#2a2a2a;letter-spacing:0.000px;white-space:pre;-webkit-text-stroke:0.30px">10</div>
<div style="position:absolute;left:390.50px;top:1416.62px;font:21px 'Liberation Sans', sans-serif;line-height:21px;color:#2a2a2a;letter-spacing:0.000px;white-space:pre;-webkit-text-stroke:0.30px">1</div>
<div style="position:absolute;left:544.00px;top:1416.62px;font:21px 'Liberation Sans', sans-serif;line-height:21px;color:#2a2a2a;letter-spacing:0.532px;white-space:pre;-webkit-text-stroke:0.30px">9.091</div>
<div style="position:absolute;left:709.50px;top:1416.62px;font:21px 'Liberation Sans', sans-serif;line-height:21px;color:#2a2a2a;letter-spacing:0.621px;white-space:pre;-webkit-text-stroke:0.30px">newWorkspaceTemplate</div>
<div style="position:absolute;left:1334.00px;top:1416.62px;font:21px 'Liberation Sans', sans-serif;line-height:21px;color:#2a2a2a;letter-spacing:0.524px;white-space:pre;-webkit-text-stroke:0.30px">DefaultResourceGroup-EUS</div>
<div style="position:absolute;left:191.50px;top:1468.12px;font:21px 'Liberation Sans', sans-serif;line-height:21px;color:#2a2a2a;letter-spacing:0.000px;white-space:pre;-webkit-text-stroke:0.30px">11</div>
<div style="position:absolute;left:390.50px;top:1468.12px;font:21px 'Liberation Sans', sans-serif;line-height:21px;color:#2a2a2a;letter-spacing:0.000px;white-space:pre;-webkit-text-stroke:0.30px">1</div>
<div style="position:absolute;left:544.00px;top:1468.12px;font:21px 'Liberation Sans', sans-serif;line-height:21px;color:#2a2a2a;letter-spacing:0.532px;white-space:pre;-webkit-text-stroke:0.30px">9.091</div>
<div style="position:absolute;left:709.50px;top:1468.12px;font:21px 'Liberation Sans', sans-serif;line-height:21px;color:#2a2a2a;letter-spacing:1.190px;white-space:pre;-webkit-text-stroke:0.30px">Microsoft.Web-WebApp-Portal-94f63f9c-835c</div>
<div style="position:absolute;left:1334.00px;top:1468.12px;font:21px 'Liberation Sans', sans-serif;line-height:21px;color:#2a2a2a;letter-spacing:1.384px;white-space:pre;-webkit-text-stroke:0.30px">rg-web-app</div>
<div style="position:absolute;left:191.50px;top:1519.62px;font:21px 'Liberation Sans', sans-serif;line-height:21px;color:#2a2a2a;letter-spacing:0.000px;white-space:pre;-webkit-text-stroke:0.30px">12</div>
<div style="position:absolute;left:390.50px;top:1519.62px;font:21px 'Liberation Sans', sans-serif;line-height:21px;color:#2a2a2a;letter-spacing:0.000px;white-space:pre;-webkit-text-stroke:0.30px">2</div>
<div style="position:absolute;left:543.00px;top:1519.62px;font:21px 'Liberation Sans', sans-serif;line-height:21px;color:#2a2a2a;letter-spacing:0.090px;white-space:pre;-webkit-text-stroke:0.30px">18.182</div>
<div style="position:absolute;left:1334.00px;top:1519.62px;font:21px 'Liberation Sans', sans-serif;line-height:21px;color:#2a2a2a;letter-spacing:1.384px;white-space:pre;-webkit-text-stroke:0.30px">rg-web-app</div>
<div style="position:absolute;left:191.50px;top:1571.12px;font:21px 'Liberation Sans', sans-serif;line-height:21px;color:#2a2a2a;letter-spacing:0.000px;white-space:pre;-webkit-text-stroke:0.30px">13</div>
<div style="position:absolute;left:390.50px;top:1571.12px;font:21px 'Liberation Sans', sans-serif;line-height:21px;color:#2a2a2a;letter-spacing:0.000px;white-space:pre;-webkit-text-stroke:0.30px">1</div>
<div style="position:absolute;left:544.00px;top:1571.12px;font:21px 'Liberation Sans', sans-serif;line-height:21px;color:#2a2a2a;letter-spacing:0.532px;white-space:pre;-webkit-text-stroke:0.30px">9.091</div>
<div style="position:absolute;left:709.50px;top:1571.12px;font:21px 'Liberation Sans', sans-serif;line-height:21px;color:#2a2a2a;letter-spacing:0.772px;white-space:pre;-webkit-text-stroke:0.30px">Failure-Anomalies-Alert-Rule-Deployment-cda710e4</div>
<div style="position:absolute;left:1334.00px;top:1571.12px;font:21px 'Liberation Sans', sans-serif;line-height:21px;color:#2a2a2a;letter-spacing:1.384px;white-space:pre;-webkit-text-stroke:0.30px">rg-web-app</div>
</body></html>
